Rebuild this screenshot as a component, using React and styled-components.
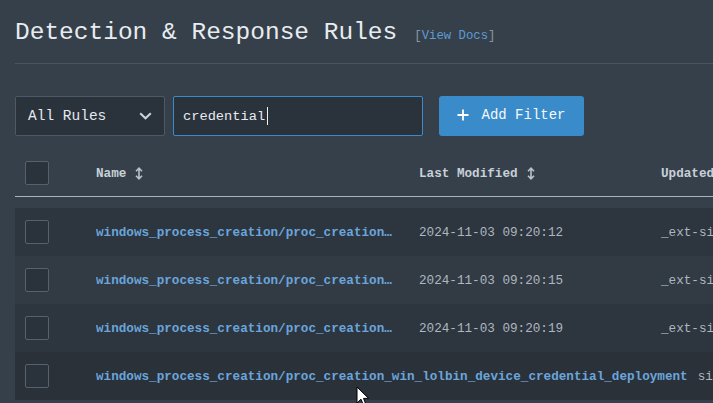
import React from "react";
import styled, { createGlobalStyle } from "styled-components";

const GlobalStyle = createGlobalStyle`
  html, body {
    margin: 0;
    padding: 0;
    background: #36404a;
    overflow: hidden;
  }
  body {
    font-family: "Liberation Mono", "DejaVu Sans Mono", monospace;
  }
`;

const Page = styled.div`
  position: relative;
  width: 713px;
  height: 403px;
  overflow: hidden;
  padding-left: 15px;
  box-sizing: border-box;
  background: #36404a;
`;

const Header = styled.div`
  display: flex;
  align-items: baseline;
  gap: 17px;
  width: 900px;
  height: 64px;
  box-sizing: border-box;
  padding-top: 18px;
  line-height: 30px;
  border-bottom: 1px solid #4a545e;
`;

const Title = styled.h1`
  margin: 0;
  font-size: 24.5px;
  font-weight: 400;
  line-height: 30px;
  color: #e8ecf0;
`;

const DocsLink = styled.a`
  font-size: 12.3px;
  color: #8a96a2;
  text-decoration: none;

  span {
    color: #5d9cd6;
  }
`;

const Toolbar = styled.div`
  display: flex;
  align-items: stretch;
  height: 40px;
  margin-top: 32px;
`;

const Select = styled.div`
  width: 150px;
  box-sizing: border-box;
  display: flex;
  align-items: center;
  justify-content: space-between;
  padding: 0 12px;
  background: #2a323b;
  border: 1px solid #4f5963;
  border-radius: 2px;
  color: #e4e9ee;
  font-size: 14.5px;
`;

const SearchBox = styled.div`
  width: 250px;
  margin-left: 8px;
  box-sizing: border-box;
  display: flex;
  align-items: center;
  padding-left: 9px;
  background: #2a323b;
  border: 1px solid #3b8bca;
  border-radius: 2px;
  color: #e8ecf0;
  font-size: 13.7px;
`;

const Caret = styled.span`
  display: inline-block;
  width: 1px;
  height: 18px;
  margin-left: 2px;
  background: #f0f0f0;
`;

const AddButton = styled.button`
  width: 145px;
  margin-left: 16px;
  display: flex;
  align-items: center;
  justify-content: center;
  gap: 12px;
  padding: 0 0 2px;
  background: #3a8bca;
  border: none;
  border-radius: 3px;
  color: #f4f8fb;
  font-family: inherit;
  font-size: 14px;
`;

const Table = styled.div`
  width: 900px;
  margin-top: 14px;
`;

const HeadRow = styled.div`
  display: flex;
  align-items: center;
  height: 46px;
  padding-left: 10px;
  border-bottom: 1px solid #aab3bc;
  margin-bottom: 11px;
`;

const Row = styled.div`
  display: flex;
  align-items: center;
  height: 48px;
  padding-left: 10px;
  background: ${({ $shade }) => $shade};
`;

const Cell = styled.div`
  width: ${({ $w }) => ($w ? `${$w}px` : "auto")};
  flex: none;
  display: flex;
  align-items: center;
  gap: 8px;
  min-width: 0;
  padding-right: ${({ $pad }) => ($pad ? `${$pad}px` : "0")};
  font-size: 12.65px;
  white-space: nowrap;
`;

const HeadLabel = styled.span`
  font-weight: 700;
  color: #c8d0d8;
`;

const Checkbox = styled.span`
  display: block;
  width: 24px;
  height: 24px;
  box-sizing: border-box;
  background: #2a323b;
  border: 1px solid #56616c;
  border-radius: 2px;
`;

const RuleName = styled.span`
  display: block;
  font-weight: 700;
  color: #6aa5dc;
  overflow: hidden;
  text-overflow: ellipsis;
  max-width: ${({ $full }) => ($full ? "none" : "300px")};
`;

const Muted = styled.span`
  color: #aeb7c0;
`;

const Pointer = styled.svg`
  position: absolute;
  left: 356px;
  top: 386px;
`;

const SortIcon = () => (
  <svg width="10" height="13" viewBox="0 0 10 13" fill="none">
    <path d="M2 4.2 L5 1.2 L8 4.2 M5 1.2 V11.8 M2 8.8 L5 11.8 L8 8.8" stroke="#b9c2cb" strokeWidth="1.6" />
  </svg>
);

const rules = [
  { name: "windows_process_creation/proc_creation_win_lolbin_credential_dump", date: "2024-11-03 09:20:12", by: "_ext-sigma", shade: "#2d353e" },
  { name: "windows_process_creation/proc_creation_win_credential_manager_access", date: "2024-11-03 09:20:15", by: "_ext-sigma", shade: "#323b44" },
  { name: "windows_process_creation/proc_creation_win_vaultcmd_credential_list", date: "2024-11-03 09:20:19", by: "_ext-sigma", shade: "#2d353e" },
  { name: "windows_process_creation/proc_creation_win_lolbin_device_credential_deployment", date: "2024-11-03 09:20:22", by: "sigma", shade: "#2a3139", hovered: true },
];

export default function App() {
  return (
    <>
      <GlobalStyle />
      <Page>
        <Header>
          <Title>Detection &amp; Response Rules</Title>
          <DocsLink>
            [<span>View Docs</span>]
          </DocsLink>
        </Header>

        <Toolbar>
          <Select>
            All Rules
            <svg width="13" height="8" viewBox="0 0 13 8" fill="none">
              <path d="M1.2 1.2 L6.5 6.3 L11.8 1.2" stroke="#cdd4db" strokeWidth="2" />
            </svg>
          </Select>
          <SearchBox>
            credential
            <Caret />
          </SearchBox>
          <AddButton>
            <svg width="12" height="12" viewBox="0 0 12 12" fill="none">
              <path d="M6 0.5 V11.5 M0.5 6 H11.5" stroke="#ffffff" strokeWidth="1.8" />
            </svg>
            Add Filter
          </AddButton>
        </Toolbar>

        <Table>
          <HeadRow>
            <Cell $w={71}>
              <Checkbox />
            </Cell>
            <Cell $w={323}>
              <HeadLabel>Name</HeadLabel>
              <SortIcon />
            </Cell>
            <Cell $w={242}>
              <HeadLabel>Last Modified</HeadLabel>
              <SortIcon />
            </Cell>
            <Cell>
              <HeadLabel>Updated By</HeadLabel>
            </Cell>
          </HeadRow>

          {rules.map((r) => (
            <Row key={r.name} $shade={r.shade}>
              <Cell $w={71}>
                <Checkbox />
              </Cell>
              {r.hovered ? (
                <Cell $pad={10}>
                  <RuleName $full>{r.name}</RuleName>
                </Cell>
              ) : (
                <>
                  <Cell $w={323}>
                    <RuleName>{r.name}</RuleName>
                  </Cell>
                  <Cell $w={242}>
                    <Muted>{r.date}</Muted>
                  </Cell>
                </>
              )}
              <Cell>
                <Muted>{r.by}</Muted>
              </Cell>
            </Row>
          ))}
        </Table>

        <Pointer width="14" height="22" viewBox="0 0 14 22">
          <path d="M1 1 L1 17 L5 13.2 L7.6 19.5 L10 18.5 L7.5 12.4 L12.6 12.4 Z" fill="#ffffff" stroke="#000000" strokeWidth="1" strokeLinejoin="round" />
        </Pointer>
      </Page>
    </>
  );
}
